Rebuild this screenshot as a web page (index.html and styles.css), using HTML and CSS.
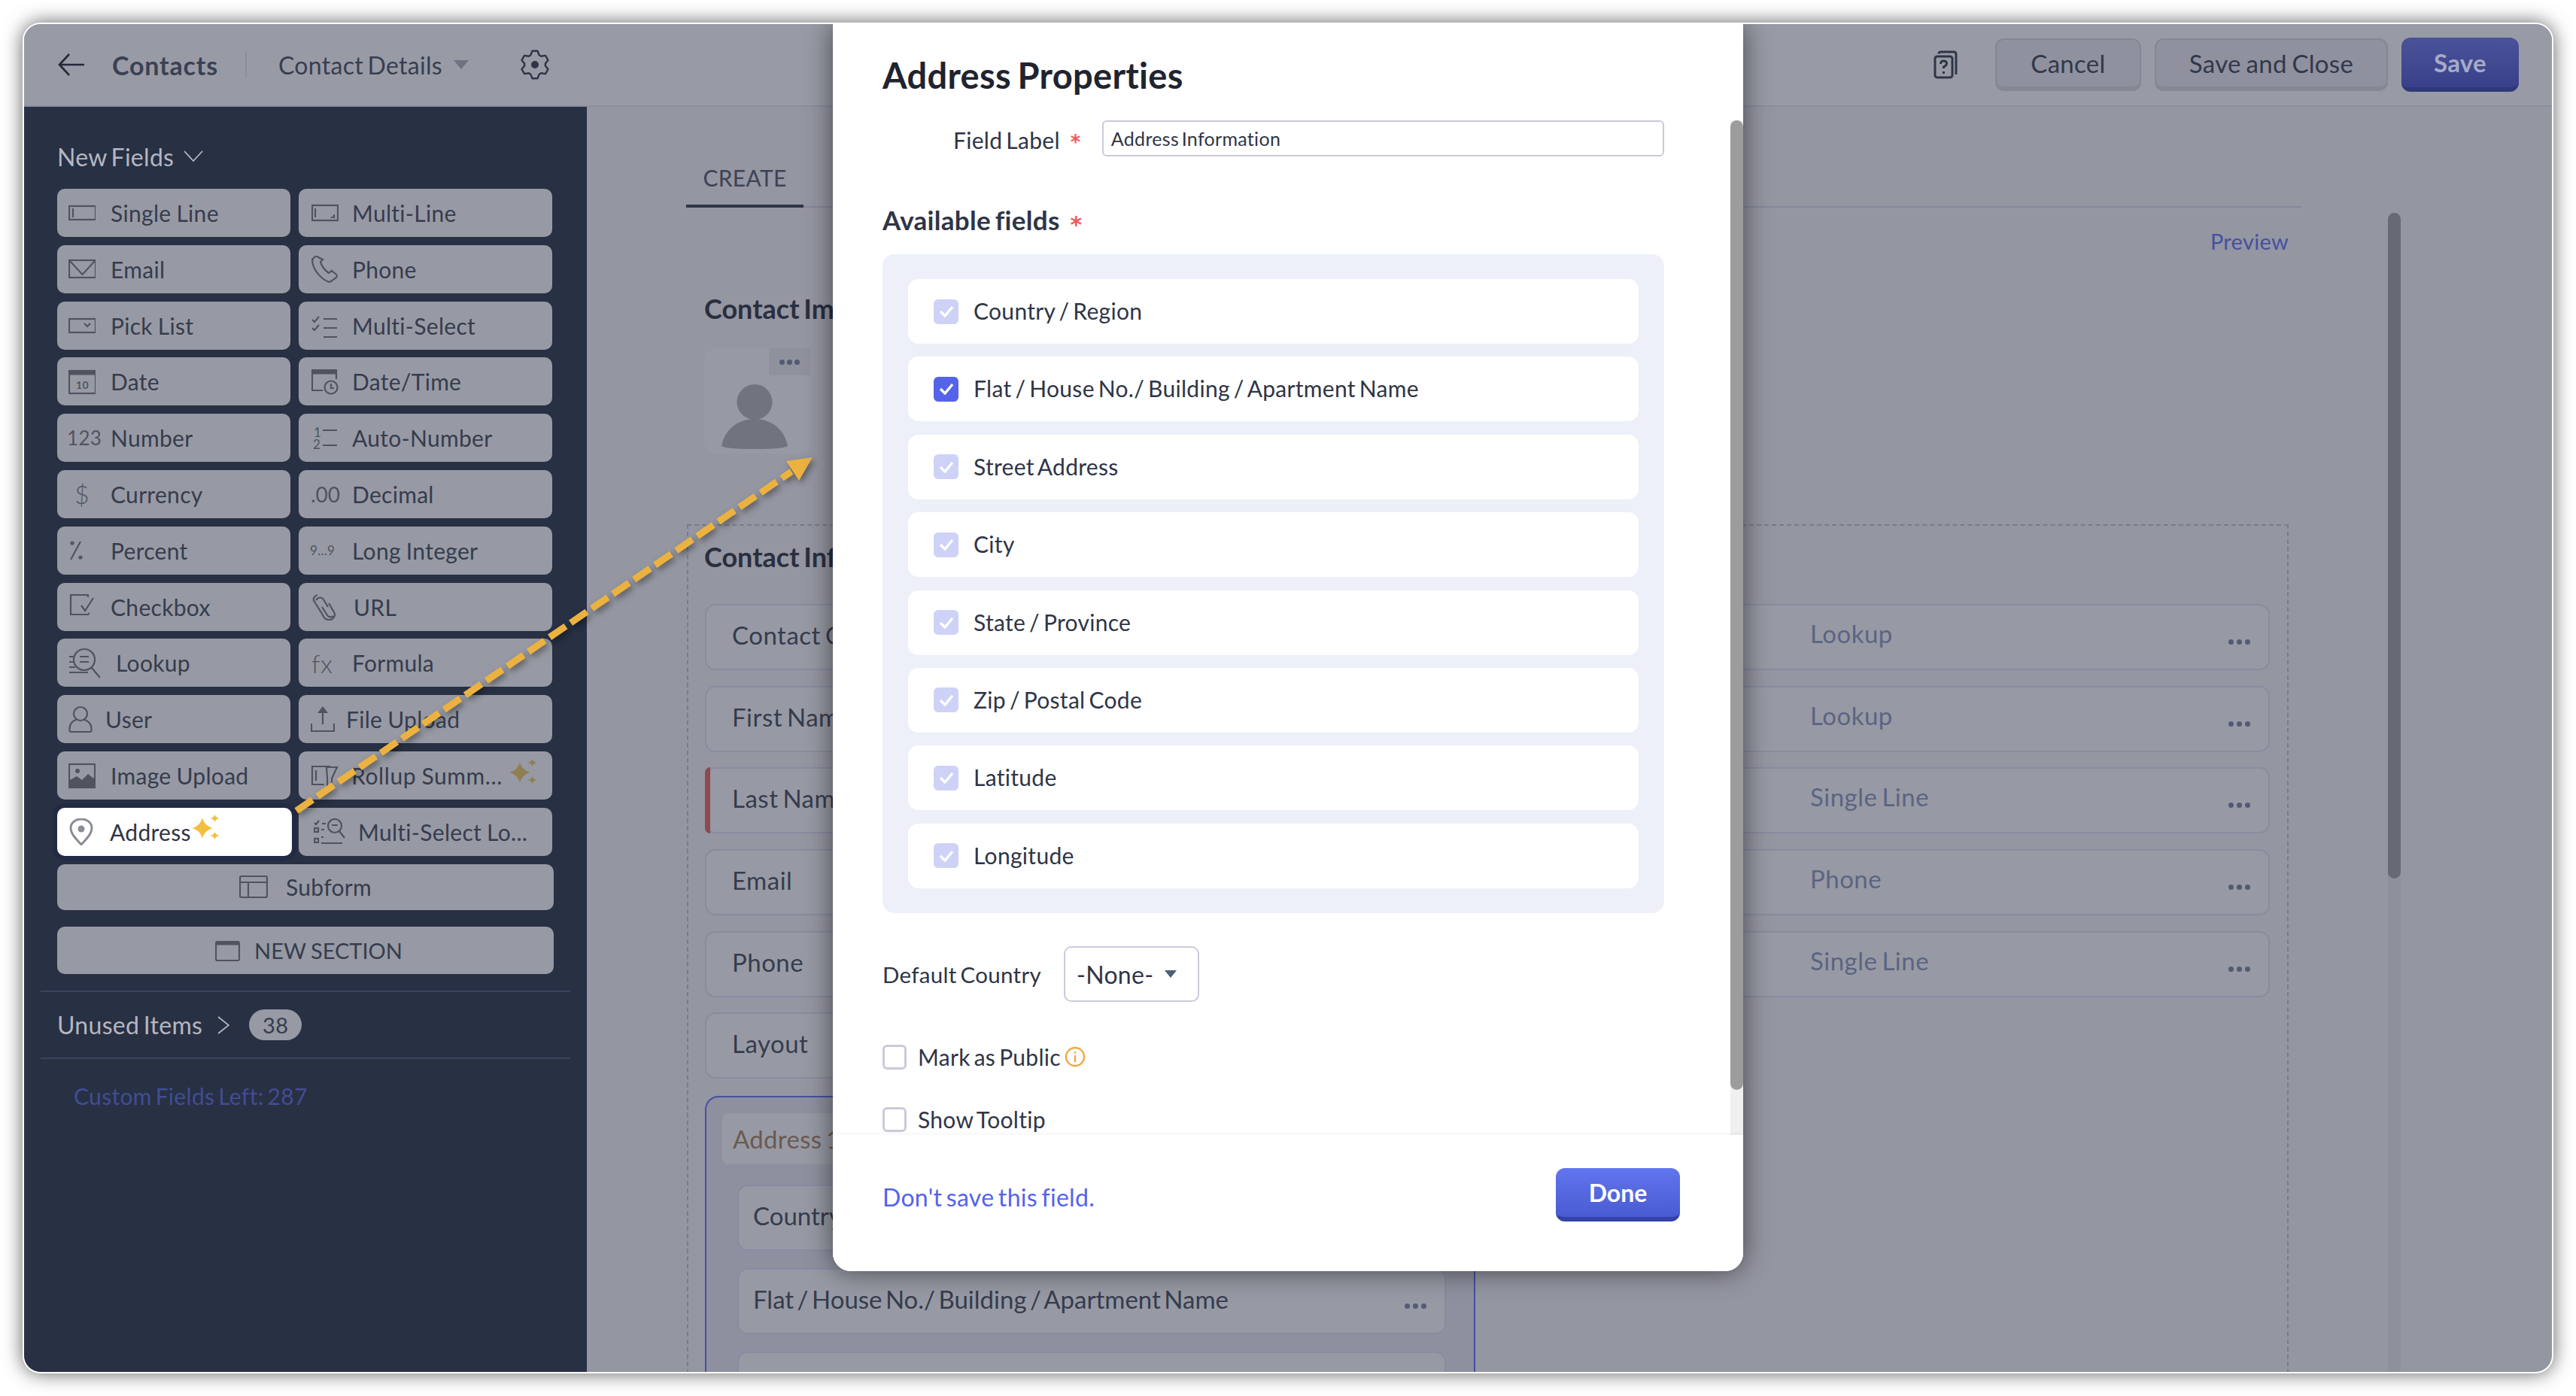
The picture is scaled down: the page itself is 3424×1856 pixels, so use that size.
FILE: index.html
```html
<!DOCTYPE html>
<html lang="en">
<head>
<meta charset="utf-8">
<title>Address Properties</title>
<link rel="stylesheet" href="styles.css">
</head>
<body>
<div class="window">
  <header class="topbar">
    <div class="top-left">
      <svg class="i-back" viewBox="0 0 36 30"><path d="M35 15H2M15 1 2 15l13 14"/></svg>
      <span class="crumb">Contacts</span>
      <span class="vsep"></span>
      <span class="layout-name">Contact Details</span>
      <span class="caret"></span>
      <svg class="i-gear" viewBox="0 0 40 40"><path d="M16.5 1.8H23.5L25.7 7.2 28.2 8.7 34 7.9 37.5 14 33.9 18.5V21.5L37.5 26 34 32.1 28.2 31.3 25.7 32.8 23.5 38.2H16.5L14.3 32.8 11.8 31.3 6 32.1 2.5 26 6.1 21.5V18.5L2.5 14 6 7.9 11.8 8.7 14.3 7.2Z"/><circle cx="20" cy="20" r="5"/></svg>
    </div>
    <div class="top-right">
      <svg class="i-help" viewBox="0 0 32 38"><path d="M7 4.500Q7 2 10 2H27Q30 2 30 5V32"/><rect x="2" y="8" width="23" height="28" rx="3"/><path d="M9.500 18q0-4 4-4t4 3.500q0 2.500-4 4.500v2"/><path d="M13.500 28v3"/></svg>
      <button class="btn">Cancel</button>
      <button class="btn btn-wide">Save and Close</button>
      <button class="btn btn-save">Save</button>
    </div>
  </header>

  <div class="workspace">
    <aside class="sidebar">
      <div class="side-title">New Fields <svg class="i-chev" viewBox="0 0 26 16"><path d="M1 1l12 13L25 1"/></svg></div>
      <div class="palette">
        <div class="tool"><svg viewBox="0 0 36 36"><rect x="1" y="9" width="35" height="18"/><path d="M6 12v12"/></svg>Single Line</div>
        <div class="tool"><svg viewBox="0 0 36 36"><rect x="1" y="8" width="34" height="20"/><path d="M5 12v12M30 20v4h-4"/></svg>Multi-Line</div>
        <div class="tool"><svg viewBox="0 0 36 36"><rect x="1" y="6" width="35" height="23"/><path d="M1 6l17.500 19L36 6"/></svg>Email</div>
        <div class="tool"><svg viewBox="0 0 36 36"><path d="M5 1 1 5c0 10 8 24 22 30l3-1 7-5c1-1 1-3 0-4l-6-5-4 3c-5-3-10-10-11-15l3-3L9 2C8 1 6 0 5 1Z"/></svg>Phone</div>
        <div class="tool"><svg viewBox="0 0 36 36"><rect x="1" y="9" width="35" height="18"/><path d="M21 15l4 4 4-4"/></svg>Pick List</div>
        <div class="tool"><svg viewBox="0 0 36 36"><path d="M1 10l3 3 6-7M1 21l3 3 6-7M16 9h18M16 21h18M16 33h18"/></svg>Multi-Select</div>
        <div class="tool"><svg viewBox="0 0 36 36"><rect x="1" y="4" width="35" height="30"/><path class="thick" d="M1 7h35"/><text x="18.500" y="28" class="i-mini">10</text></svg>Date</div>
        <div class="tool"><svg viewBox="0 0 36 36"><path d="M15 30H1V3h32v12"/><path class="thick" d="M1 6h32"/><circle cx="26" cy="26" r="8.500"/><path d="M26 21v6h4"/></svg>Date/Time</div>
        <div class="tool"><span class="glyph g-num">123</span>Number</div>
        <div class="tool"><svg class="i-auto" viewBox="0 0 36 36"><text x="3" y="17" class="i-num">1</text><text x="2" y="33" class="i-num">2</text><path d="M15 8h19M15 28h19"/></svg>Auto-Number</div>
        <div class="tool"><span class="glyph g-cur">$</span>Currency</div>
        <div class="tool"><span class="glyph g-dec">.00</span>Decimal</div>
        <div class="tool"><svg viewBox="0 0 36 36"><path d="M3 30 16 6"/><circle cx="5" cy="8" r="1.500"/><circle cx="16" cy="27" r="1.500"/></svg>Percent</div>
        <div class="tool"><span class="glyph g-long">9...9</span>Long Integer</div>
        <div class="tool"><svg viewBox="0 0 36 36"><path d="M26 5V2H3v26h23l2-2"/><path d="M17 16l5 7L33 6"/></svg>Checkbox</div>
        <div class="tool t-url"><svg viewBox="0 0 36 36"><path d="M8 2c-4 1-7 5-4 9l10 16c2 4 3 7 8 8 6 1 11-5 8-10l-7-12M6 9c3-5 8-4 10-1l6 10"/><path d="M14 18l7 11c2 3 6 3 8 1"/></svg>URL</div>
        <div class="tool t-lookup"><svg viewBox="0 0 42 42"><circle cx="21" cy="17" r="14"/><path d="M15 13h12M15 20h12M31 28l11 13M1 13h6M1 20h6M1 27h8M1 34h25"/></svg>Lookup</div>
        <div class="tool"><span class="glyph g-fx">fx</span>Formula</div>
        <div class="tool t-user"><svg viewBox="0 0 32 36"><circle cx="16" cy="11" r="9"/><path d="M10 19c-6 2-9 7-8.500 14 0 1 1 2 2 2h25c1 0 2-1 2-2 .5-7-3-12-9-14"/></svg>User</div>
        <div class="tool t-upload"><svg viewBox="0 0 32 36"><path d="M16 25V7"/><path class="solid" d="M16 1l7 9H9Z"/><path d="M1 24v10h30V24"/></svg>File Upload</div>
        <div class="tool"><svg viewBox="0 0 36 36"><rect x="1" y="3" width="34" height="31"/><circle cx="12" cy="12" r="3" class="solid"/><path class="solid" d="M2 33V24l9-5 7 5 8-8 9 7v10Z"/></svg>Image Upload</div>
        <div class="tool t-rollup"><svg viewBox="0 0 38 38"><path d="M26 7H2v24h16M7 12v14"/><path d="M21 8h14l-7 15v13l-6 1V22Z"/></svg>Rollup Summ...<svg class="spark spark-dim" viewBox="0 0 36 36"><path d="M13.500 4.500Q16.500 15 27 18 16.500 21 13.500 31.500 10.500 21 0 18 10.500 15 13.500 4.500Z"/><path d="M30 0Q31 4 36 5 31 6 30 10 29 6 24 5 29 4 30 0ZM30 23Q31 27 36 28 31 29 30 33 29 29 24 28 29 27 30 23Z"/></svg></div>
        <div class="tool tool-active"><svg class="i-pin" viewBox="0 0 34 36"><path d="M17 35C10 27 3 21 3 13 3 6 9 1 17 1s14 5 14 12c0 8-7 14-14 22Z"/><circle class="solid" cx="17" cy="14" r="4.500"/></svg>Address<svg class="spark spark-on" viewBox="0 0 36 36"><path d="M13.500 4.500Q16.500 15 27 18 16.500 21 13.500 31.500 10.500 21 0 18 10.500 15 13.500 4.500Z"/><path d="M30 0Q31 4 36 5 31 6 30 10 29 6 24 5 29 4 30 0ZM30 23Q31 27 36 28 31 29 30 33 29 29 24 28 29 27 30 23Z"/></svg></div>
        <div class="tool t-mlookup"><svg viewBox="0 0 42 36"><path d="M1 6l2 2 4-5M11 7h5M10 15h4M10 25h3M10 33h28"/><rect x="1" y="13" width="5" height="5"/><rect x="1" y="27" width="5" height="5"/><circle cx="28" cy="10" r="9"/><path d="M24 9h8M34 17l7 9"/></svg>Multi-Select Lo...</div>
        <div class="tool tool-full tool-sub"><svg viewBox="0 0 38 30"><rect x="1" y="1" width="36" height="28" rx="2"/><path d="M1 9h36M12 9v20"/></svg>Subform</div>
        <div class="tool tool-full tool-sec"><svg viewBox="0 0 34 28"><rect x="1" y="2" width="31" height="25" rx="2"/><path class="thick" d="M1 4h31"/></svg>NEW SECTION</div>
      </div>
      <div class="unused"><span>Unused Items</span><svg class="i-chev-r" viewBox="0 0 16 24"><path d="M1 1l14 11L1 23"/></svg><span class="badge">38</span></div>
      <div class="left-count">Custom Fields Left: 287</div>
    </aside>

    <main class="main">
      <div class="canvas">
        <div class="tabs"><span class="tab">CREATE</span></div>
        <div class="preview">Preview</div>
        <h3 class="sec-head sec-image">Contact Image</h3>
        <div class="photo">
          <span class="photo-menu"><i></i><i></i><i></i></span>
          <svg class="i-person" viewBox="0 0 88 92"><circle cx="44" cy="23.500" r="23.500"/><path d="M0 82C4 60 22 46 44 46s40 14 44 36c-4 3-22 4-44 4S4 85 0 82Z"/></svg>
        </div>
        <section class="dropzone">
          <h3 class="sec-head">Contact Information</h3>
          <div class="columns">
            <div class="col">
              <div class="field">Contact Owner</div>
              <div class="field">First Name</div>
              <div class="field field-req">Last Name</div>
              <div class="field">Email</div>
              <div class="field">Phone</div>
              <div class="field">Layout</div>
              <div class="addr-group">
                <div class="addr-head">Address 1</div>
                <div class="field field-in">Country / Region</div>
                <div class="field field-in">Flat / House No./ Building / Apartment Name<span class="dots"><i></i><i></i><i></i></span></div>
                <div class="field field-in"></div>
              </div>
            </div>
            <div class="col">
              <div class="field field-r">Lookup<span class="dots"><i></i><i></i><i></i></span></div>
              <div class="field field-r">Lookup<span class="dots"><i></i><i></i><i></i></span></div>
              <div class="field field-r">Single Line<span class="dots"><i></i><i></i><i></i></span></div>
              <div class="field field-r">Phone<span class="dots"><i></i><i></i><i></i></span></div>
              <div class="field field-r">Single Line<span class="dots"><i></i><i></i><i></i></span></div>
            </div>
          </div>
        </section>
      </div>
      <div class="page-scroll"><span class="page-thumb"></span></div>
    </main>
  </div>

  <svg class="arrow" viewBox="32 32 3360 1792">
    <g>
      <path class="arrow-line" d="M394 1078 1052 627"/>
      <path class="arrow-head" d="M1080 608 1045 613 1062 639Z"/>
    </g>
  </svg>

  <div class="modal">
    <div class="modal-body">
      <h2 class="modal-title">Address Properties</h2>
      <div class="label-row">
        <label class="f-label">Field Label</label><span class="star">*</span>
        <div class="text-input">Address Information</div>
      </div>
      <h4 class="avail">Available fields <span class="star star-lg">*</span></h4>
      <div class="avail-panel">
        <div class="avail-row"><span class="check check-off"><svg viewBox="0 0 20 16"><path d="M2 8l6 6L18 2"/></svg></span><span class="row-text">Country / Region</span></div>
        <div class="avail-row"><span class="check"><svg viewBox="0 0 20 16"><path d="M2 8l6 6L18 2"/></svg></span><span class="row-text">Flat / House No./ Building / Apartment Name</span></div>
        <div class="avail-row"><span class="check check-off"><svg viewBox="0 0 20 16"><path d="M2 8l6 6L18 2"/></svg></span><span class="row-text">Street Address</span></div>
        <div class="avail-row"><span class="check check-off"><svg viewBox="0 0 20 16"><path d="M2 8l6 6L18 2"/></svg></span><span class="row-text">City</span></div>
        <div class="avail-row"><span class="check check-off"><svg viewBox="0 0 20 16"><path d="M2 8l6 6L18 2"/></svg></span><span class="row-text">State / Province</span></div>
        <div class="avail-row"><span class="check check-off"><svg viewBox="0 0 20 16"><path d="M2 8l6 6L18 2"/></svg></span><span class="row-text">Zip / Postal Code</span></div>
        <div class="avail-row"><span class="check check-off"><svg viewBox="0 0 20 16"><path d="M2 8l6 6L18 2"/></svg></span><span class="row-text">Latitude</span></div>
        <div class="avail-row"><span class="check check-off"><svg viewBox="0 0 20 16"><path d="M2 8l6 6L18 2"/></svg></span><span class="row-text">Longitude</span></div>
      </div>
      <div class="country-row">
        <span class="country-label">Default Country</span>
        <div class="select">-None-<span class="select-caret"></span></div>
      </div>
      <div class="opt opt-public"><span class="box"></span>Mark as Public<svg class="i-info" viewBox="0 0 28 28"><circle cx="14" cy="14" r="12"/><path d="M14 12v9M14 7v2.500"/></svg></div>
      <div class="opt opt-tip"><span class="box"></span>Show Tooltip</div>
    </div>
    <div class="modal-scroll"><span class="modal-thumb"></span></div>
    <footer class="modal-foot">
      <a class="discard">Don't save this field.</a>
      <button class="done">Done</button>
    </footer>
  </div>
</div>
</body>
</html>
```
FILE: styles.css
```css
* { box-sizing: border-box; }
html, body { margin: 0; padding: 0; background: #fff; }
body { width: 3424px; height: 1856px; padding: 30px; font-family: "Lato", "Liberation Sans", sans-serif; letter-spacing: .3px; word-spacing: -3px; overflow: hidden; }

.window {
  position: relative;
  width: 3364px;
  height: 1796px;
  border: 2px solid #fff;
  border-radius: 24px;
  overflow: hidden;
  display: flex;
  flex-direction: column;
  background: #9496a2;
  box-shadow: 0 0 26px rgba(0, 0, 0, .62);
}

/* top bar */
.topbar {
  height: 110px;
  flex: none;
  display: flex;
  justify-content: space-between;
  align-items: center;
  background: #989ba5;
  border-bottom: 2px solid #8b8ea0;
  padding: 0 44px 0 45px;
}
.top-left, .top-right { display: flex; align-items: center; }
.i-back { width: 36px; height: 30px; fill: none; stroke: #23293a; stroke-width: 2.600; margin-right: 36px; }
.crumb { font-size: 34px; font-weight: 700; color: #3b4153; width: 177px; letter-spacing: .8px; }
.vsep { width: 2px; height: 36px; background: #8b8ea0; margin-right: 42px; }
.layout-name { font-size: 32px; color: #383e50; width: 233px; }
.caret { width: 0; height: 0; border-left: 10px solid transparent; border-right: 10px solid transparent; border-top: 12px solid #6e7282; }
.i-gear { width: 40px; height: 40px; margin-left: 68px; fill: none; stroke: #2f3546; stroke-width: 2.400; stroke-linejoin: round; }
.i-gear circle { fill: #2f3546; stroke: none; }
.i-help { width: 32px; height: 38px; margin-right: 50px; fill: none; stroke: #2f3648; stroke-width: 3; }
.btn {
  height: 70px;
  width: 194px;
  margin-right: 18px;
  font: 400 33px "Lato", sans-serif;
  letter-spacing: .3px;
  word-spacing: -2px;
  color: #32384a;
  background: #8f919f;
  border: 2px solid #858795;
  border-bottom-width: 6px;
  border-radius: 12px;
}
.btn-wide { width: 310px; }
.btn-save { width: 156px; height: 72px; margin-right: 0; color: #a6abc8; background: linear-gradient(#4a5299, #39418a); border: 0; border-bottom: 6px solid #2f3878; font-weight: 700; }

/* layout */
.workspace { flex: 1; display: flex; min-height: 0; }

/* sidebar */
.sidebar { width: 748px; flex: none; background: #283044; padding: 46px 22px 0; }
.side-title { display: flex; align-items: center; height: 40px; margin-left: 22px; font-size: 32px; color: #b4b7c0; }
.i-chev { width: 26px; height: 16px; margin-left: 13px; fill: none; stroke: #b4b7c0; stroke-width: 1.800; }
.palette {
  margin: 23px 0 0 22px;
  display: grid;
  grid-template-columns: 310px 339px;
  column-gap: 11px;
  row-gap: 10.800px;
  width: 660px;
}
.tool {
  height: 64px;
  display: flex;
  align-items: center;
  padding-left: 15px;
  background: #979aa4;
  border-radius: 10px;
  font-size: 30px;
  color: #363c4e;
  white-space: nowrap;
  word-spacing: -1px;
}
.tool:nth-child(even) { margin-right: 2px; padding-left: 17px; }
.tool > svg:first-child {
  width: 36px; height: 36px; flex: none; margin-right: 20px;
  fill: none; stroke: #50545f; stroke-width: 2.200;
}
.tool:nth-child(even) > svg:first-child { margin-right: 18px; }
.tool .thick { stroke-width: 5; }
.tool .solid { fill: #50545f; stroke: none; }
.i-mini { font: 700 14px "Lato", sans-serif; fill: #50545f; stroke: none; text-anchor: middle; }
.i-num { font: 400 17px "Lato", sans-serif; fill: #50545f; stroke: none; }
.glyph { width: 36px; margin-right: 20px; flex: none; color: #50545f; white-space: nowrap; }
.g-num { font-size: 26px; margin-left: -2px; margin-right: 22px; }
.g-cur { font-size: 34px; font-weight: 300; text-align: center; }
.g-dec { font-size: 28px; letter-spacing: 0; margin-left: -1px; margin-right: 19px; }
.g-long { font-size: 17px; margin-left: -2px; margin-right: 20px; }
.g-fx { font-size: 34px; font-weight: 300; margin-right: 18px; }
.tool.t-url > svg:first-child { margin-right: 20px; }
.tool.t-lookup > svg:first-child { width: 42px; height: 42px; margin-right: 21px; }
.tool.t-user > svg:first-child { width: 32px; height: 36px; margin-right: 17px; }
.tool.t-upload { padding-left: 16px; }
.tool.t-upload > svg:first-child { width: 32px; height: 36px; margin-right: 15px; }
.tool.t-rollup { padding-left: 16px; letter-spacing: .6px; }
.tool.t-rollup > svg:first-child { width: 38px; height: 38px; margin-right: 16px; }
.tool.t-mlookup { padding-left: 20px; }
.tool.t-mlookup > svg:first-child { width: 42px; height: 36px; margin-right: 17px; }
.spark { flex: none; width: 37px; height: 36px; }
.spark-dim { fill: #8f7f52; margin-left: 9px; margin-bottom: 8px; }
.spark-on { fill: #f2bf3f; margin-left: 1px; margin-bottom: 9px; }
.tool-active { background: #fff; color: #2f3546; margin-right: -2px; box-shadow: 0 0 0 6px #222a45; position: relative; }
.tool-active > svg.i-pin { width: 34px; height: 36px; margin-right: 21px; fill: none; stroke: #8a8d96; stroke-width: 3; }
.tool-active .solid { fill: #8a8d96; stroke: none; }
.tool-full { grid-column: 1 / span 2; margin-right: 0 !important; justify-content: center; padding-left: 0; }
.tool-sub { height: 61px; }
.tool-sub > svg:first-child { width: 38px; height: 30px; margin-right: 24px; }
.tool-sec { height: 63px; margin-top: 12px; font-size: 29px; letter-spacing: 0; padding-right: 8px; }
.tool-sec > svg:first-child { width: 34px; height: 28px; margin-right: 25px; }
.unused {
  height: 91px;
  margin-top: 22px;
  display: flex;
  align-items: center;
  padding-left: 22px;
  border-top: 2px solid #39435e;
  border-bottom: 2px solid #39435e;
  font-size: 32px;
  color: #b4b7c0;
}
.i-chev-r { width: 16px; height: 24px; margin-left: 20px; fill: none; stroke: #b4b7c0; stroke-width: 1.800; }
.badge { width: 70px; height: 41px; margin-left: 26px; border-radius: 21px; background: #979aa4; color: #363c4e; font-size: 29px; display: flex; align-items: center; justify-content: center; }
.left-count { margin: 31px 0 0 44px; font-size: 30px; line-height: 36px; color: #414d94; }

/* main */
.main { flex: 1; display: flex; min-width: 0; overflow: hidden; }
.canvas { width: 2394px; padding: 0 115px 0 132px; flex: none; }
.tabs { height: 134px; border-bottom: 2px solid #858899; display: flex; align-items: flex-end; }
.tab { width: 156px; height: 64px; padding-top: 6px; text-align: center; font-size: 30px; color: #3d4356; border-bottom: 4px solid #2f3648; margin-bottom: -2px; }
.preview { margin-top: 27px; height: 36px; line-height: 36px; font-size: 29px; text-align: right; color: #4650a0; padding-right: 17px; }
.sec-head { margin: 0; font-size: 36px; font-weight: 700; color: #2a2f3e; line-height: 40px; white-space: nowrap; letter-spacing: 0; }
.sec-image { margin: 51px 0 0 24px; }
.photo { position: relative; margin: 33px 0 0 24px; width: 141px; height: 140px; border-radius: 16px; background: #979aa4; display: flex; justify-content: center; align-items: flex-end; }
.photo-menu { position: absolute; top: 0; right: 0; width: 55px; height: 36px; background: #8f919d; display: flex; gap: 3px; align-items: center; justify-content: center; }
.photo-menu i, .dots i { display: block; width: 7px; height: 7px; border-radius: 50%; background: #525a75; }
.i-person { width: 88px; height: 92px; margin-right: 8px; fill: #70747e; }
.dropzone { margin: 94px 0 0 1px; height: 1200px; border: 2px dashed #797c8a; border-bottom: 0; padding: 21px 24px 0 22px; width: 2129px; }
.dropzone > .sec-head { margin-left: -1px; }
.columns { display: grid; grid-template-columns: 1024px 1036px; gap: 0 20px; margin-top: 43px; }
.col { display: flex; flex-direction: column; gap: 20.700px; }
.field {
  height: 88px;
  flex: none;
  position: relative;
  display: flex;
  align-items: center;
  padding: 0 0 6px 34px;
  background: #979aa4;
  border: 2px solid #898ca0;
  border-radius: 14px;
  font-size: 33px;
  letter-spacing: .5px;
  color: #363c4e;
  white-space: nowrap;
}
.field-req::before { content: ""; position: absolute; left: -2px; top: -2px; bottom: -2px; width: 7px; border-radius: 7px 0 0 7px; background: #8f4a50; }
.field-r { padding-left: 423px; padding-bottom: 10px; color: #5c6482; }
.dots { position: absolute; right: 24px; top: 50%; margin-top: 3px; display: flex; gap: 4px; }
.addr-group { margin-top: 2px; border: 2px solid #4650a0; border-bottom: 0; border-radius: 18px 18px 0 0; height: 500px; padding: 21px 37px 0 41px; background: #8e909f; }
.addr-head { margin-left: -20px; width: 300px; height: 68px; line-height: 68px; padding-left: 14px; background: #979aa4; border-radius: 8px; color: #6a5a50; font-size: 33px; margin-bottom: 27px; }
.field-in { margin-bottom: 23px; padding-left: 19px; letter-spacing: 0; word-spacing: -4px; }
.page-scroll { width: 17px; margin-top: 141px; background: #8e909c; border-radius: 8px 8px 0 0; flex: none; }
.page-thumb { display: block; height: 885px; background: #676a76; border-radius: 9px; }

/* arrow */
.arrow { position: absolute; left: 0; top: 0; width: 3360px; height: 1792px; pointer-events: none; filter: drop-shadow(3px 4px 4px rgba(0, 0, 0, .4)); }
.arrow-line { fill: none; stroke: #ecb240; stroke-width: 9; stroke-dasharray: 26 8; }
.arrow-head { fill: #ecb240; }

/* modal */
.modal {
  position: absolute;
  left: 1075px;
  top: 0;
  width: 1210px;
  height: 1658px;
  background: #fff;
  border-radius: 0 0 24px 24px;
  box-shadow: 0 0 36px rgba(0, 0, 0, .55);
  display: flex;
  flex-direction: column;
  overflow: hidden;
}
.modal-body { height: 1477px; padding: 0 105px 0 66px; overflow: hidden; flex: none; }
.modal-title { margin: 40px 0 0; font-size: 47px; line-height: 56px; font-weight: 700; color: #1f2430; }
.label-row { display: flex; align-items: center; height: 48px; margin-top: 32px; padding-left: 94px; }
.f-label { font-size: 30px; color: #2f3546; margin-top: 4px; }
.star { color: #ef5b5b; font-family: "DejaVu Sans", sans-serif; font-size: 30px; font-weight: 700; line-height: 30px; }
.label-row .star { margin: 10px 0 0 14px; width: 42px; font-size: 26px; }
.text-input { flex: 1; height: 48px; border: 2px solid #c9cbdb; border-radius: 6px; padding: 2px 10px 0; font-size: 25px; line-height: 40px; color: #2f3546; }
.avail { margin: 62px 0 0; height: 44px; font-size: 35px; line-height: 44px; font-weight: 700; color: #2f3546; }
.star-lg { margin-left: 8px; vertical-align: -3px; }
.avail-panel { margin-top: 24px; height: 876px; background: #edf0f8; border-radius: 16px; padding: 33px 34px; display: flex; flex-direction: column; gap: 17.400px; }
.avail-row { height: 86px; flex: none; display: flex; align-items: center; background: #fff; border-radius: 14px; padding: 0 34px; font-size: 30px; color: #2f3546; }
.row-text { margin-bottom: 2px; }
.check { width: 33px; height: 33px; flex: none; margin-right: 20px; border-radius: 6px; background: #5563ea; display: flex; align-items: center; justify-content: center; }
.check svg { width: 20px; height: 16px; fill: none; stroke: #fff; stroke-width: 3.400; }
.check-off { background: #ced2f7; }
.country-row { display: flex; align-items: center; margin-top: 44px; height: 74px; }
.country-label { font-size: 29.500px; color: #2f3546; width: 241px; }
.select { width: 180px; height: 74px; border: 2px solid #c9cbdb; border-radius: 10px; display: flex; align-items: center; padding-left: 15px; font-size: 32px; color: #2f3546; }
.select-caret { margin-left: 15px; width: 0; height: 0; border-left: 8px solid transparent; border-right: 8px solid transparent; border-top: 10px solid #4a6076; }
.opt { display: flex; align-items: center; font-size: 30px; color: #2f3546; }
.opt-public { margin-top: 57px; height: 32px; }
.opt-tip { margin-top: 51px; height: 32px; }
.box { width: 32px; height: 33px; margin-right: 15px; border: 3px solid #c9cbdb; border-radius: 6px; }
.i-info { width: 28px; height: 28px; margin-left: 5px; fill: none; stroke: #efa746; stroke-width: 2.400; }
.modal-scroll { position: absolute; right: 0; top: 128px; bottom: 181px; width: 17px; background: #f0f0f0; }
.modal-thumb { display: block; height: 1289px; background: #9c9c9c; border-radius: 9px; }
.modal-foot { flex: 1; position: relative; display: flex; align-items: flex-start; justify-content: space-between; padding: 44px 84px 0 66px; background: #fff; box-shadow: 0 -2px 6px rgba(0, 0, 0, .04); }
.discard { font-size: 32px; color: #5563ea; margin-top: 19px; }
.done { width: 165px; height: 71px; border: 0; border-bottom: 6px solid #3442a8; border-radius: 12px; background: linear-gradient(#6175ee, #4a5bd2); color: #fff; font: 700 32px "Lato", sans-serif; }
```
